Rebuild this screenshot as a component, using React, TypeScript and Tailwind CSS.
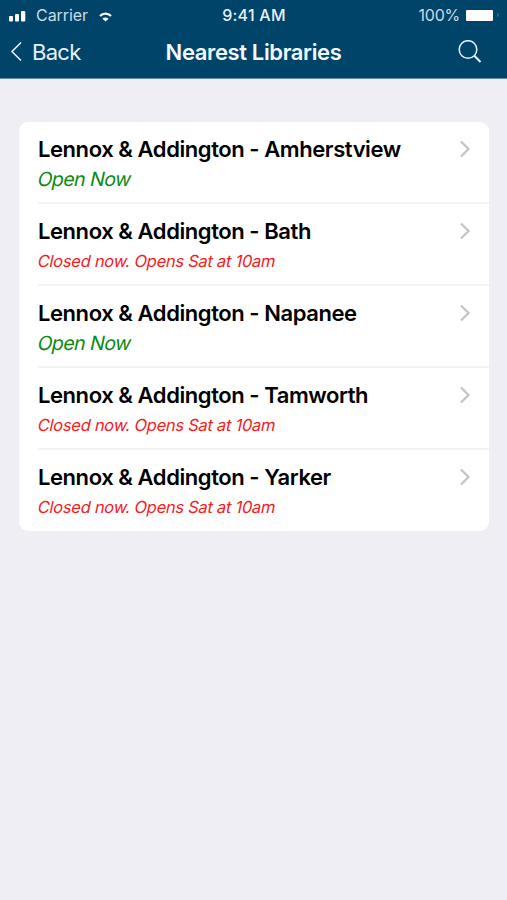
interface Library {
  name: string
  open: boolean
}

const libraries: Library[] = [
  { name: 'Lennox & Addington - Amherstview', open: true },
  { name: 'Lennox & Addington - Bath', open: false },
  { name: 'Lennox & Addington - Napanee', open: true },
  { name: 'Lennox & Addington - Tamworth', open: false },
  { name: 'Lennox & Addington - Yarker', open: false },
]

function StatusBar() {
  return (
    <div className="grid h-[30px] grid-cols-3 items-center pl-[9px] pr-[8px] text-[16px] leading-[30px] text-[#c9dbe6]">
      <div className="flex items-center">
        <svg className="mt-px" width="17" height="12" viewBox="0 0 17 12" fill="#fff" aria-hidden="true">
          <rect x="0" y="6" width="4" height="5.5" rx="1" />
          <rect x="6" y="4" width="4" height="7.5" rx="1" />
          <rect x="12" y="1" width="4.3" height="10.5" rx="1" />
        </svg>
        <span className="ml-[10px] tracking-[-0.05px]">Carrier</span>
        <svg className="ml-[11px] mt-[3px]" width="13" height="10" viewBox="0 0 13 10" fill="none" aria-hidden="true">
          <path d="M1 4C4 0.9 9 0.9 12 4" stroke="#fff" strokeWidth="2.3" />
          <path d="M6.5 9.6L3.4 6.7C5.2 5.1 7.8 5.1 9.6 6.7Z" fill="#fff" />
        </svg>
      </div>
      <span className="text-center text-[16px] font-medium tracking-[0.25px] text-[#e6f0f6]">9:41 AM</span>
      <div className="flex items-center justify-end">
        <span className="tracking-[-0.25px]">100%</span>
        <div className="ml-[6px] h-[11px] w-[27px] rounded-[1px] bg-white" />
        <div className="ml-[4px] h-[4px] w-[2px] rounded-r-full bg-[#2f6485]" />
      </div>
    </div>
  )
}

function NavBar() {
  return (
    <div className="grid h-[48px] grid-cols-[1fr_auto_1fr] items-center px-[10px] pb-[4px]">
      <button className="flex items-center text-[22px] leading-[43px] tracking-[-0.7px] text-[#e4f1f9]">
        <svg className="mr-[9px]" width="13" height="22" viewBox="0 0 13 22" fill="none" aria-hidden="true">
          <path d="M11 1.5L2 10.5L11 19.5" stroke="currentColor" strokeWidth="1.6" />
        </svg>
        Back
      </button>
      <h1 className="text-[22px] font-[580] leading-[44px] tracking-[-0.37px] text-[#f1f8fc]">
        Nearest Libraries
      </h1>
      <button className="mr-[15px] justify-self-end" aria-label="Search">
        <svg width="24" height="24" viewBox="0 0 24 24" fill="none" aria-hidden="true">
          <circle cx="10" cy="9.5" r="8.8" stroke="#e4f1f9" strokeWidth="1.5" />
          <path d="M16.3 15.8L22.5 22" stroke="#e4f1f9" strokeWidth="2" />
        </svg>
      </button>
    </div>
  )
}

function LibraryRow({ library }: { library: Library }) {
  return (
    <li className="group flex h-[82px] pl-[19px] last:h-[81px]">
      <div className="flex flex-1 justify-between border-b-2 border-[#f2f2f3] pr-[18px] group-last:border-b-0">
        <div>
          <h2 className="mt-[13px] whitespace-nowrap text-[22px] font-[580] leading-[28px] tracking-[-0.43px] text-black">
            {library.name}
          </h2>
          {/* slanted roman letters, Inter's own italic has a different "a" */}
          {library.open ? (
            <p className="-skew-x-12 whitespace-nowrap text-[19.5px] leading-[32px] tracking-[-0.55px] text-[#0a8a12]">
              Open Now
            </p>
          ) : (
            <p className="-skew-x-12 whitespace-nowrap text-[16.5px] leading-[33px] tracking-[-0.28px] text-[#f5201c]">
              Closed now. Opens Sat at 10am
            </p>
          )}
        </div>
        <svg className="mt-[18px]" width="12" height="18" viewBox="0 0 12 18" fill="none" aria-hidden="true">
          <path d="M2 1.5L9.5 9L2 16.5" stroke="#c6c6c8" strokeWidth="2.3" />
        </svg>
      </div>
    </li>
  )
}

export default function App() {
  return (
    <div className="min-h-screen bg-[#efeef4] font-['Inter',sans-serif]">
      <header className="h-[79px] border-b border-[#5f8da8] bg-[#004469]">
        <StatusBar />
        <NavBar />
      </header>
      <main className="pl-[19px] pr-[18px] pt-[43px]">
        <ul className="overflow-hidden rounded-[9px] bg-white">
          {libraries.map((library) => (
            <LibraryRow key={library.name} library={library} />
          ))}
        </ul>
      </main>
    </div>
  )
}
